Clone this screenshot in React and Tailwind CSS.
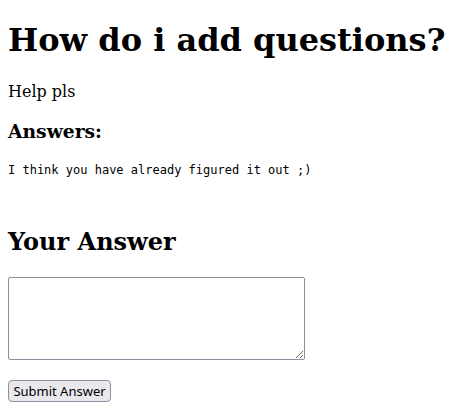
const answers = ['I think you have already figured it out ;)'];

export default function App() {
  return (
    <div className="px-2 font-['DejaVu_Serif',serif] text-black bg-white">
      <h1 className="text-[32px] font-bold leading-[normal] mt-[21.44px] mb-[22.5px]">How do i add questions?</h1>
      <p className="text-base leading-[normal] mt-4 mb-4">Help pls</p>

      <h3 className="text-[18.72px] font-bold leading-[normal] my-[18.72px]">Answers:</h3>
      {answers.map((a, i) => (
        <pre key={i} className="font-['DejaVu_Sans_Mono',monospace] text-[12px] leading-[normal] mt-[21.5px] mb-[13px]">{a}</pre>
      ))}

      <h2 className="text-[24px] font-bold leading-[normal] mt-[50px] mb-[21px]">Your Answer</h2>
      <form onSubmit={(e) => e.preventDefault()}>
        <textarea className="block w-[297px] h-[83px] border border-[#8f8f9d] rounded-[2px] bg-white p-[2px] font-['DejaVu_Sans_Mono',monospace] text-[13px] resize-y"></textarea>
        <button
          type="submit"
          className="block mt-[20px] w-[103px] h-[22px] px-[4px] border border-[#8f8f9d] rounded-[4px] bg-[#e9e9ed] font-['Noto_Sans',sans-serif] text-[13px] leading-none text-black"
        >
          Submit Answer
        </button>
      </form>
    </div>
  );
}
